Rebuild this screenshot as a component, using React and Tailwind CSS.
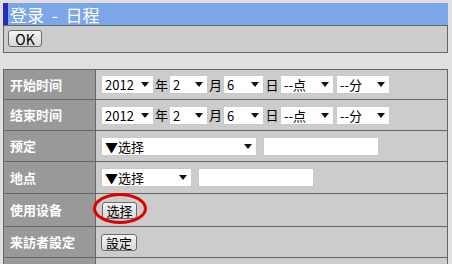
import React from "react";

const FONT = { fontFamily: '"Noto Sans CJK SC", "Liberation Sans", sans-serif' };

function Arrow() {
  return (
    <svg width="8" height="5" viewBox="0 0 8 5" className="shrink-0">
      <path d="M0 0 L8 0 L4 5 Z" fill="#111" />
    </svg>
  );
}

function Sel({ w, text, arrow = true }) {
  return (
    <div
      className={`h-[19px] ${w} bg-white border border-[#c8c8d0] flex items-center justify-between pl-[3px] pr-[4px] text-[13px] leading-none text-black shrink-0`}
    >
      <span className="whitespace-nowrap">{text}</span>
      {arrow && <Arrow />}
    </div>
  );
}

function Btn({ children, className = "" }) {
  return (
    <div
      className={`h-[17px] border border-[#6a6a6a] rounded-[3px] bg-gradient-to-b from-[#f4f4f4] to-[#d8d8d8] flex items-center justify-center text-[13px] leading-none text-black ${className}`}
    >
      {children}
    </div>
  );
}

function Row({ label, h, children }) {
  return (
    <div className={`flex ${h} border-b border-[#666]`}>
      <div className="w-[92px] shrink-0 bg-[#999999] border-r border-[#666] flex items-center pl-[6px] text-white font-bold text-[13px]">
        {label}
      </div>
      <div className="flex-1 bg-[#cccccc] flex items-center pl-[5px]">{children}</div>
    </div>
  );
}

function DateRow() {
  return (
    <div className="flex items-center gap-0 text-[13px] text-black">
      <Sel w="w-[53px]" text="2012" />
      <span className="w-[15px] text-center">年</span>
      <Sel w="w-[39px]" text="2" />
      <span className="w-[15px] text-center">月</span>
      <Sel w="w-[41px]" text="6" />
      <span className="w-[16px] text-center">日</span>
      <Sel w="w-[54px]" text="--点" />
      <div className="w-[2px]" />
      <Sel w="w-[54px]" text="--分" />
    </div>
  );
}

export default function App() {
  return (
    <div className="w-[452px] h-[264px] bg-[#e0e0e0] overflow-hidden pt-[3px] pl-[3px]" style={FONT}>
      <div className="w-[445px] h-[22px] bg-[#7ba6e8] border-l-[5px] border-[#2b2bc0] flex items-center pl-[2px] text-white text-[17px] leading-none [word-spacing:4px]">
        登录 - 日程
      </div>
      <div className="w-[445px] h-[28px] bg-[#cccccc] border border-[#666] pl-[4px] pt-[4px]">
        <Btn className="w-[34px] text-[14px]">OK</Btn>
      </div>
      <div className="w-[445px] mt-[16px] border-l border-r border-t border-[#666]">
        <Row label="开始时间" h="h-[30px]">
          <DateRow />
        </Row>
        <Row label="结束时间" h="h-[31px]">
          <DateRow />
        </Row>
        <Row label="预定" h="h-[31px]">
          <div className="flex items-center gap-[6px]">
            <Sel w="w-[156px]" text="▼选择" />
            <div className="w-[116px] h-[19px] bg-white border border-[#c8c8d0]" />
          </div>
        </Row>
        <Row label="地点" h="h-[32px]">
          <div className="flex items-center gap-[6px]">
            <Sel w="w-[91px]" text="▼选择" />
            <div className="w-[116px] h-[19px] bg-white border border-[#c8c8d0]" />
          </div>
        </Row>
        <Row label="使用设备" h="h-[33px]">
          <div className="relative ml-[1px]">
            <Btn className="w-[35px]">选择</Btn>
            <div className="absolute left-[-9px] top-[-9px] w-[54px] h-[31px] rounded-[50%] border-[3px] border-[#e00000] pointer-events-none" />
          </div>
        </Row>
        <Row label="来訪者設定" h="h-[31px]">
          <Btn className="w-[36px]">設定</Btn>
        </Row>
        <Row label="" h="h-[31px]">
          <span />
        </Row>
      </div>
    </div>
  );
}
